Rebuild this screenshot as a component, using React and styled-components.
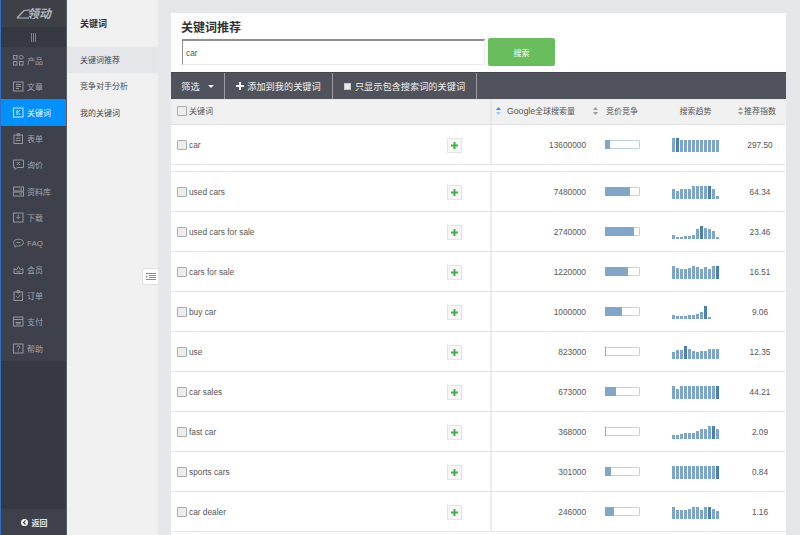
import React from 'react';
import styled, { createGlobalStyle } from 'styled-components';

const GlobalStyle = createGlobalStyle`
  html, body {
    margin: 0;
    padding: 0;
    height: 100%;
    overflow: hidden;
    background: #e6e7eb;
    font-family: "Liberation Sans", "Noto Sans CJK SC", sans-serif;
    color: #444;
  }
  * { box-sizing: border-box; }
`;

const Page = styled.div`
  display: flex;
  width: 800px;
  height: 535px;
  overflow: hidden;
`;

// 左侧深色导航
const Sidebar = styled.aside`
  display: flex;
  flex-direction: column;
  flex: 0 0 67px;
  background: #363942;
  border-left: 1px solid #2f6fc4;
  border-right: 1px solid #5a5c64;
`;

const LogoBar = styled.div`
  display: flex;
  align-items: center;
  justify-content: center;
  height: 27px;
  background: #3d4047;
  color: #b4b6bb;
`;

const LogoText = styled.span`
  font-size: 12px;
  font-style: italic;
  font-weight: 700;
  line-height: 1;
  margin-left: -3px;
`;

const ToggleBar = styled.div`
  display: flex;
  align-items: center;
  justify-content: center;
  gap: 1px;
  height: 20px;
`;

const ToggleLine = styled.i`
  width: 1px;
  height: 9px;
  background: #8a8455;
`;

const Menu = styled.nav`
  display: flex;
  flex-direction: column;
  background: #3e404c;
`;

const MenuItem = styled.a`
  display: flex;
  align-items: center;
  gap: 3px;
  height: 26.2px;
  padding-left: 12px;
  font-size: 8px;
  color: ${(p) => (p.$active ? '#fff' : '#a3a5ac')};
  background: ${(p) => (p.$active ? '#0090ff' : 'transparent')};

  svg {
    color: ${(p) => (p.$active ? '#cfe8ff' : '#94969d')};
  }
`;

const BackBar = styled.div`
  display: flex;
  align-items: center;
  justify-content: center;
  gap: 4px;
  height: 26px;
  margin-top: auto;
  padding-left: 1px;
  background: #3e404c;
  color: #e4e4e4;
  font-size: 8px;
  font-weight: 700;
`;

const BackDot = styled.span`
  display: flex;
  align-items: center;
  justify-content: center;
  width: 7px;
  height: 7px;
  border-radius: 50%;
  background: #fff;
`;

// 二级导航
const SubNav = styled.aside`
  position: relative;
  flex: 0 0 91px;
  background: #f0f0f0;
`;

const SubTitle = styled.div`
  height: 47px;
  padding: 18px 0 0 13px;
  font-size: 9px;
  font-weight: 700;
  line-height: 13px;
  color: #333;
`;

const SubItem = styled.div`
  height: 26.3px;
  padding: 1px 0 0 13px;
  font-size: 8px;
  line-height: 26px;
  color: #444;
  background: ${(p) => (p.$active ? '#e5e6ea' : 'transparent')};
`;

const CollapseTab = styled.div`
  position: absolute;
  top: 268px;
  right: 0;
  display: flex;
  align-items: center;
  justify-content: center;
  width: 16px;
  height: 17px;
  background: #fff;
  border: 1px solid #e2e2e2;
  border-right: 0;
  border-radius: 3px 0 0 3px;
`;

// 主内容
const Main = styled.main`
  flex: 1;
  padding: 13px 14px 0 13px;
  overflow: hidden;
`;

const SearchCard = styled.section`
  height: 59px;
  padding: 8px 11px 0;
  background: #fff;
`;

const Title = styled.h1`
  margin: 0 0 2px -1px;
  font-size: 12px;
  font-weight: 700;
  line-height: 15px;
  color: #333;
`;

const SearchRow = styled.div`
  display: flex;
  align-items: center;
  gap: 3px;
`;

const SearchInput = styled.input`
  width: 303px;
  height: 26px;
  padding: 0 3px;
  font: 8.3px "Liberation Sans", sans-serif;
  color: #555;
  background: #fff;
  border: 1px solid #ededed;
  border-top: 2px solid #8f8f8f;
  border-left: 1px solid #8f8f8f;
  outline: 0;
`;

const SearchButton = styled.button`
  width: 67px;
  height: 28px;
  padding: 0;
  font: 8px "Liberation Sans", "Noto Sans CJK SC", sans-serif;
  color: #fff;
  background: #69bd5c;
  border: 0;
  border-radius: 2px;
`;

const Toolbar = styled.div`
  display: flex;
  height: 27px;
  background: #50535c;
  border-top: 1px solid #44464e;
  color: #f0f0f0;
  font-size: 9.2px;
`;

const ToolItem = styled.div`
  display: flex;
  align-items: center;
  justify-content: center;
  gap: 3px;
  width: ${(p) => p.$w}px;
  border-right: 1px solid #9a9ca2;
`;

const Caret = styled.i`
  width: 0;
  height: 0;
  margin-left: 5px;
  border: 3px solid transparent;
  border-top: 3px solid #f0f0f0;
  border-bottom: 0;
`;

const ToolCheck = styled.i`
  width: 7px;
  height: 7px;
  margin-right: 1px;
  background: #e9e9e9;
  border: 1px solid #c8c8c8;
`;

const cols = '321px 99px 70px 69px 1fr';

const HeadRow = styled.div`
  display: grid;
  grid-template-columns: ${cols};
  height: 25px;
  margin-top: 1px;
  background: #f0f0f0;
  border-bottom: 1px solid #e2e2e2;
  font-size: 8px;
  color: #555;
`;

const HeadCell = styled.div`
  display: flex;
  align-items: center;
  gap: ${(p) => p.$gap || 3}px;
  justify-content: ${(p) => p.$justify || 'flex-start'};
  padding: 0 0 3px ${(p) => p.$pl || 0}px;
  border-right: ${(p) => (p.$divider ? '2px solid #e6e6e6' : '0')};
`;

const Latin = styled.span`
  font-size: 8.7px;
`;

const Body = styled.div`
  min-height: 420px;
  background: #fff;
`;

const Row = styled.div`
  display: grid;
  grid-template-columns: ${cols};
  height: 40px;
  border-bottom: 1px solid #e6e6e6;
  font-size: 8.3px;
  color: #555;
`;

const Spacer = styled.div`
  height: 7px;
  border-bottom: 1px solid #e6e6e6;
  background: #fff;
`;

const KeywordCell = styled.div`
  display: flex;
  align-items: center;
  gap: 2px;
  padding: 1px 28px 0 6px;
  border-right: 2px solid #ededed;
`;

const Check = styled.i`
  flex: none;
  width: 10px;
  height: 10px;
  background: #ededed;
  border: 1px solid #acacac;
  border-radius: 1px;
`;

const AddButton = styled.span`
  display: flex;
  align-items: center;
  justify-content: center;
  width: 15px;
  height: 15px;
  margin-left: auto;
  margin-top: 1px;
  background: #f7f7f7;
  border: 1px solid #e4e4e4;
`;

const Volume = styled.div`
  display: flex;
  align-items: center;
  justify-content: flex-end;
  padding: 1px 5px 0 0;
`;

const CompeteCell = styled.div`
  display: flex;
  align-items: center;
  padding-left: 14px;
`;

const Compete = styled.div`
  width: 35px;
  height: 9px;
  background: #fff;
  border: 1px solid #bcd0e4;
  border-radius: 1px;
`;

const CompeteFill = styled.div`
  height: 9px;
  margin: -1px 0 0 -1px;
  background: #81a6ca;
`;

const TrendCell = styled.div`
  display: flex;
  align-items: center;
  padding-left: 11px;
`;

const Trend = styled.div`
  display: flex;
  align-items: flex-end;
  gap: 1.5px;
  height: 14px;
`;

const TrendBar = styled.i`
  width: 2.5px;
  background: ${(p) => (p.$peak ? '#4b80b3' : '#7ea5cc')};
`;

const Score = styled.div`
  display: flex;
  align-items: center;
  justify-content: center;
  padding: 1px 0 0 4px;
`;

const SortIcon = ({ active }) => (
  <svg width="5" height="8" viewBox="0 0 5 8">
    <path d="M2.5 0 5 3H0z" fill={active ? '#2a95e8' : '#9a9a9a'} />
    <path d="M2.5 8 0 5h5z" fill={active ? '#9ccbee' : '#9a9a9a'} />
  </svg>
);

const Ico = ({ children }) => (
  <svg width="11" height="11" viewBox="0 0 11 11" fill="none" stroke="currentColor" strokeWidth="1" style={{ flex: 'none' }}>
    {children}
  </svg>
);

const menu = [
  ['产品', <><rect x=".5" y=".5" width="3.500" height="3.500" /><circle cx="8.200" cy="2.300" r="1.900" /><rect x=".5" y="6.500" width="3.500" height="3.500" /><rect x="6.500" y="6.500" width="3.500" height="3.500" /></>],
  ['文章', <><rect x=".5" y="1" width="9.500" height="9" /><path d="M3 3.500h5M3 5.500h5M3 7.500h3" /></>],
  ['关键词', <><rect x=".5" y="1" width="9.500" height="9" /><path d="M4 3v5M7 3 4.500 5.500 7 8" /></>],
  ['表单', <><rect x="1" y="2" width="8.500" height="8.500" /><path d="M4 .7h2.500v2H4zM3 5.200h4.500M3 7.500h4.500" /></>],
  ['询价', <><path d="M.5 1h10v7.500H4L2 10.500v-2H.5z" /><path d="M3.800 3 6.800 6M6.800 3 3.800 6" /></>],
  ['资料库', <><rect x=".5" y="1" width="10" height="4" /><rect x=".5" y="6" width="10" height="4" /><path d="M6.500 3h2.500M6.500 8h2.500" /></>],
  ['下载', <><rect x=".5" y="1" width="9.500" height="9" /><path d="M5.200 2.500v4M3.400 4.900 5.200 6.700 7 4.900" /></>],
  ['FAQ', <><path d="M5.500 1.200c2.700 0 5 1.500 5 3.400S8.200 8 5.500 8c-.6 0-1.200-.1-1.700-.2L2 9.200V7.200C1 6.600.5 5.700.5 4.600.5 2.700 2.800 1.200 5.500 1.200z" /><path d="M3.500 4.500h4" /></>],
  ['会员', <><path d="M1 4.500 3.400 6 5.500 2.500 7.600 6 10 4.500V9.500H1z" /><path d="M3.500 7.800h4" /></>],
  ['订单', <><rect x="1" y="2" width="8.500" height="8.500" /><path d="M4 .7h2.500v2H4zM3.200 6.200 4.800 7.800 7.400 4.600" /></>],
  ['支付', <><rect x=".5" y="1" width="9.500" height="9" /><path d="M.5 3.500h9.500M2.500 6.500h5.500M3 8h4.500" /></>],
  ['帮助', <><rect x=".5" y="1" width="9.500" height="9" /><path d="M3.800 4.200C3.800 2.400 6.800 2.400 6.800 4.100 6.800 5.200 5.300 5.200 5.300 6.500M5.300 7.400v1" /></>],
];

const rows = [
  { name: 'car', volume: '13600000', compete: 15, score: '297.50', peak: 1, trend: [14, 14, 12, 12, 12, 12, 12, 12, 12, 12, 12, 12] },
  { name: 'used cars', volume: '7480000', compete: 76, score: '64.34', peak: 9, trend: [10, 8, 10, 10, 10, 13, 13, 13, 13, 13, 10, 3] },
  { name: 'used cars for sale', volume: '2740000', compete: 89, score: '23.46', peak: 7, trend: [4, 2, 2, 3, 3, 4, 10, 13, 11, 10, 8, 2] },
  { name: 'cars for sale', volume: '1220000', compete: 70, score: '16.51', peak: 11, trend: [13, 11, 10, 10, 11, 13, 12, 10, 12, 10, 13, 13] },
  { name: 'buy car', volume: '1000000', compete: 53, score: '9.06', peak: 8, trend: [4, 3, 3, 3, 4, 4, 5, 7, 13, 2] },
  { name: 'use', volume: '823000', compete: 4, score: '12.35', peak: 3, trend: [7, 9, 9, 13, 10, 8, 7, 8, 8, 10, 10, 10] },
  { name: 'car sales', volume: '673000', compete: 32, score: '44.21', peak: 11, trend: [13, 10, 13, 13, 13, 13, 13, 13, 13, 13, 13, 13] },
  { name: 'fast car', volume: '368000', compete: 4, score: '2.09', peak: 10, trend: [4, 4, 5, 6, 6, 6, 8, 10, 10, 13, 13, 10] },
  { name: 'sports cars', volume: '301000', compete: 18, score: '0.84', peak: 11, trend: [13, 13, 13, 13, 13, 13, 13, 13, 13, 13, 13, 13] },
  { name: 'car dealer', volume: '246000', compete: 28, score: '1.16', peak: 9, trend: [12, 9, 9, 9, 10, 12, 12, 9, 12, 12, 10, 8] },
];

function KeywordRow({ row }) {
  return (
    <Row>
      <KeywordCell>
        <Check />
        {row.name}
        <AddButton>
          <svg width="7" height="7" viewBox="0 0 7 7"><path d="M2.500 0h2v2.500H7v2H4.500V7h-2V4.500H0v-2h2.500z" fill="#3bb54a" /></svg>
        </AddButton>
      </KeywordCell>
      <Volume>{row.volume}</Volume>
      <CompeteCell>
        <Compete>
          <CompeteFill style={{ width: `${row.compete}%` }} />
        </Compete>
      </CompeteCell>
      <TrendCell>
        <Trend>
          {row.trend.map((h, i) => (
            <TrendBar key={i} $peak={i === row.peak} style={{ height: h }} />
          ))}
        </Trend>
      </TrendCell>
      <Score>{row.score}</Score>
    </Row>
  );
}

export default function App() {
  return (
    <Page>
      <GlobalStyle />
      <Sidebar>
        <LogoBar>
          <svg width="14" height="12" viewBox="0 0 14 12" fill="none" stroke="#b4b6bb" strokeWidth="1.200">
            <path d="M1 10 8 2.500 14 2M1 10h12" />
          </svg>
          <LogoText>领动</LogoText>
        </LogoBar>
        <ToggleBar>
          <ToggleLine />
          <ToggleLine />
          <ToggleLine />
        </ToggleBar>
        <Menu>
          {menu.map(([label, icon]) => (
            <MenuItem key={label} $active={label === '关键词'}>
              <Ico>{icon}</Ico>
              {label}
            </MenuItem>
          ))}
        </Menu>
        <BackBar>
          <BackDot>
            <svg width="5" height="5" viewBox="0 0 5 5"><path d="M3.500.5 1.500 2.500l2 2" fill="none" stroke="#3e404c" strokeWidth="1.200" /></svg>
          </BackDot>
          返回
        </BackBar>
      </Sidebar>

      <SubNav>
        <SubTitle>关键词</SubTitle>
        <SubItem $active>关键词推荐</SubItem>
        <SubItem>竞争对手分析</SubItem>
        <SubItem>我的关键词</SubItem>
        <CollapseTab>
          <svg width="10" height="8" viewBox="0 0 10 8" stroke="#8c8c8c" strokeWidth="1">
            <path d="M0 .5h10M3 2.500h7M3 4.500h7M0 6.500h10" />
            <path d="M0 2.500v2L2 3.500z" fill="#8c8c8c" stroke="none" />
          </svg>
        </CollapseTab>
      </SubNav>

      <Main>
        <SearchCard>
          <Title>关键词推荐</Title>
          <SearchRow>
            <SearchInput defaultValue="car" />
            <SearchButton>搜索</SearchButton>
          </SearchRow>
        </SearchCard>

        <Toolbar>
          <ToolItem $w={54}>筛选<Caret /></ToolItem>
          <ToolItem $w={108}>
            <svg width="8" height="8" viewBox="0 0 8 8"><path d="M3 0h2v3h3v2H5v3H3V5H0V3h3z" fill="#f4f4f4" /></svg>
            添加到我的关键词
          </ToolItem>
          <ToolItem $w={144}><ToolCheck />只显示包含搜索词的关键词</ToolItem>
        </Toolbar>

        <HeadRow>
          <HeadCell $pl={6} $divider $gap={2}><Check />关键词</HeadCell>
          <HeadCell $pl={4} $gap={6}><SortIcon active /><span><Latin>Google</Latin>全球搜索量</span></HeadCell>
          <HeadCell $pl={2} $gap={8}><SortIcon />竞价竞争</HeadCell>
          <HeadCell $justify="center">搜索趋势</HeadCell>
          <HeadCell $pl={8} $gap={1}><SortIcon />推荐指数</HeadCell>
        </HeadRow>

        <Body>
          <KeywordRow row={rows[0]} />
          <Spacer />
          {rows.slice(1).map((row) => (
            <KeywordRow key={row.name} row={row} />
          ))}
        </Body>
      </Main>
    </Page>
  );
}
